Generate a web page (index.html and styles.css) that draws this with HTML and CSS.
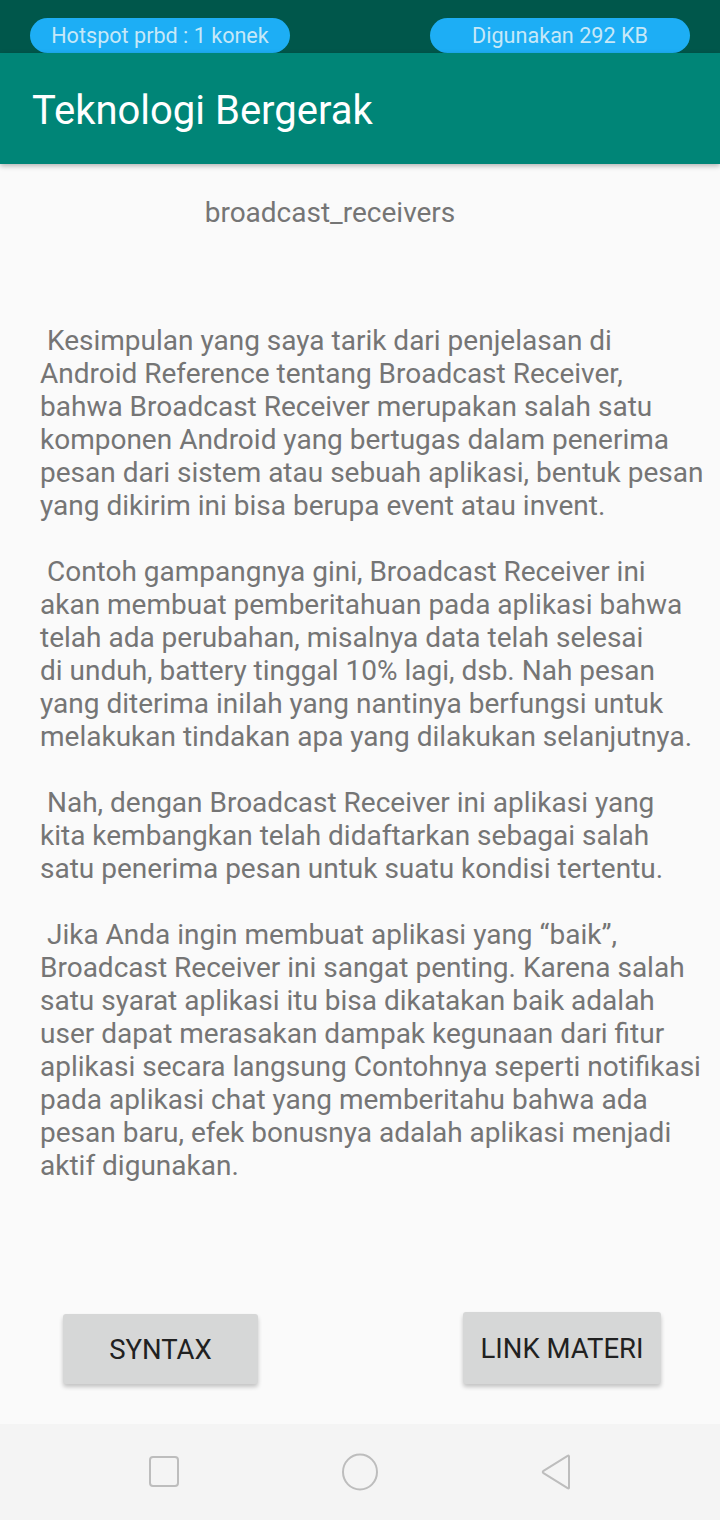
FILE: index.html
```html
<!DOCTYPE html>
<html>
<head>
<meta charset="utf-8">
<link rel="stylesheet" href="styles.css">
</head>
<body>
<div class="page">
  <div class="status">
    <div class="pill">Hotspot prbd : 1 konek</div>
    <div class="pill">Digunakan 292 KB</div>
  </div>
  <div class="toolbar"><span class="toolbar-title">Teknologi Bergerak</span></div>
  <main class="content">
    <div class="subtitle">broadcast_receivers</div>
    <div class="article">
      <p>&nbsp;Kesimpulan yang saya tarik dari penjelasan di<br>Android Reference tentang Broadcast Receiver,<br>bahwa Broadcast Receiver merupakan salah satu<br>komponen Android yang bertugas dalam penerima<br>pesan dari sistem atau sebuah aplikasi, bentuk pesan<br>yang dikirim ini bisa berupa event atau invent.</p>
      <p>&nbsp;Contoh gampangnya gini, Broadcast Receiver ini<br>akan membuat pemberitahuan pada aplikasi bahwa<br>telah ada perubahan, misalnya data telah selesai<br>di unduh, battery tinggal 10% lagi, dsb. Nah pesan<br>yang diterima inilah yang nantinya berfungsi untuk<br>melakukan tindakan apa yang dilakukan selanjutnya.</p>
      <p>&nbsp;Nah, dengan Broadcast Receiver ini aplikasi yang<br>kita kembangkan telah didaftarkan sebagai salah<br>satu penerima pesan untuk suatu kondisi tertentu.</p>
      <p>&nbsp;Jika Anda ingin membuat aplikasi yang “baik”,<br>Broadcast Receiver ini sangat penting. Karena salah<br>satu syarat aplikasi itu bisa dikatakan baik adalah<br>user dapat merasakan dampak kegunaan dari fitur<br>aplikasi secara langsung Contohnya seperti notifikasi<br>pada aplikasi chat yang memberitahu bahwa ada<br>pesan baru, efek bonusnya adalah aplikasi menjadi<br>aktif digunakan.</p>
    </div>
  </main>
  <div class="actions">
    <button class="btn btn-syntax">SYNTAX</button>
    <button class="btn btn-link">LINK MATERI</button>
  </div>
  <nav class="navbar">
    <svg class="nav-icon" width="36" height="36" viewBox="0 0 36 36"><rect x="4" y="3" width="28" height="29" rx="3" fill="none" stroke="#BDBDBD" stroke-width="2"/></svg>
    <svg class="nav-icon" width="38" height="38" viewBox="0 0 38 38"><ellipse cx="19" cy="19" rx="17" ry="17.5" fill="none" stroke="#BDBDBD" stroke-width="2"/></svg>
    <svg class="nav-icon" width="36" height="38" viewBox="0 0 36 38"><path d="M31 3.5 Q31 2 29.6 2.8 L5.5 17.8 Q4 19 5.5 20.2 L29.6 35.2 Q31 36 31 34.5 Z" fill="none" stroke="#BDBDBD" stroke-width="2" stroke-linejoin="round"/></svg>
  </nav>
</div>
</body>
</html>
```

FILE: styles.css
```css
* { box-sizing: border-box; }
html, body { margin: 0; padding: 0; }
body {
  width: 720px;
  height: 1520px;
  background: #FAFAFA;
  font-family: Roboto, "Liberation Sans", sans-serif;
  overflow: hidden;
}
.page {
  display: flex;
  flex-direction: column;
  height: 1520px;
}
.status {
  height: 53px;
  flex: none;
  background: #00574B;
  display: flex;
  justify-content: space-between;
  align-items: flex-end;
  padding: 0 30px;
}
.pill {
  width: 260px;
  height: 35px;
  border-radius: 18px;
  background: #1DAEF5;
  color: #C6E8F8;
  font-size: 21.6px;
  display: flex;
  align-items: center;
  justify-content: center;
}
.toolbar {
  height: 111px;
  flex: none;
  background: #008577;
  display: flex;
  align-items: center;
  padding: 4px 0 0 32px;
  box-shadow: 0 2px 5px rgba(0, 0, 0, 0.28);
  position: relative;
  z-index: 1;
}
.toolbar-title {
  color: #FFFFFF;
  font-size: 40px;
}
.content {
  flex: 1;
  display: flex;
  flex-direction: column;
}
.subtitle {
  margin-top: 32px;
  padding-right: 60px;
  text-align: center;
  color: #757575;
  font-size: 28px;
  line-height: 33px;
}
.article {
  margin-top: 95px;
  padding-left: 40px;
  color: #757575;
  font-size: 28px;
  line-height: 33px;
}
.article p {
  margin: 0 0 33px 0;
  white-space: nowrap;
}
.actions {
  flex: none;
  height: 120px;
  display: flex;
  align-items: flex-start;
  padding: 8px 59px 0 63px;
  justify-content: space-between;
}
.btn {
  border: none;
  background: #D6D7D7;
  color: #212121;
  font-family: Roboto, "Liberation Sans", sans-serif;
  font-size: 27.5px;
  border-radius: 3px;
  box-shadow: 0 3px 4px rgba(0, 0, 0, 0.22);
  padding: 0;
}
.btn-syntax {
  width: 195px;
  height: 70px;
  margin-top: 2px;
}
.btn-link {
  width: 198px;
  height: 72px;
}
.navbar {
  height: 96px;
  flex: none;
  background: #F4F4F4;
  display: flex;
  justify-content: space-between;
  align-items: center;
  padding: 0 146px 0 146px;
}
```
